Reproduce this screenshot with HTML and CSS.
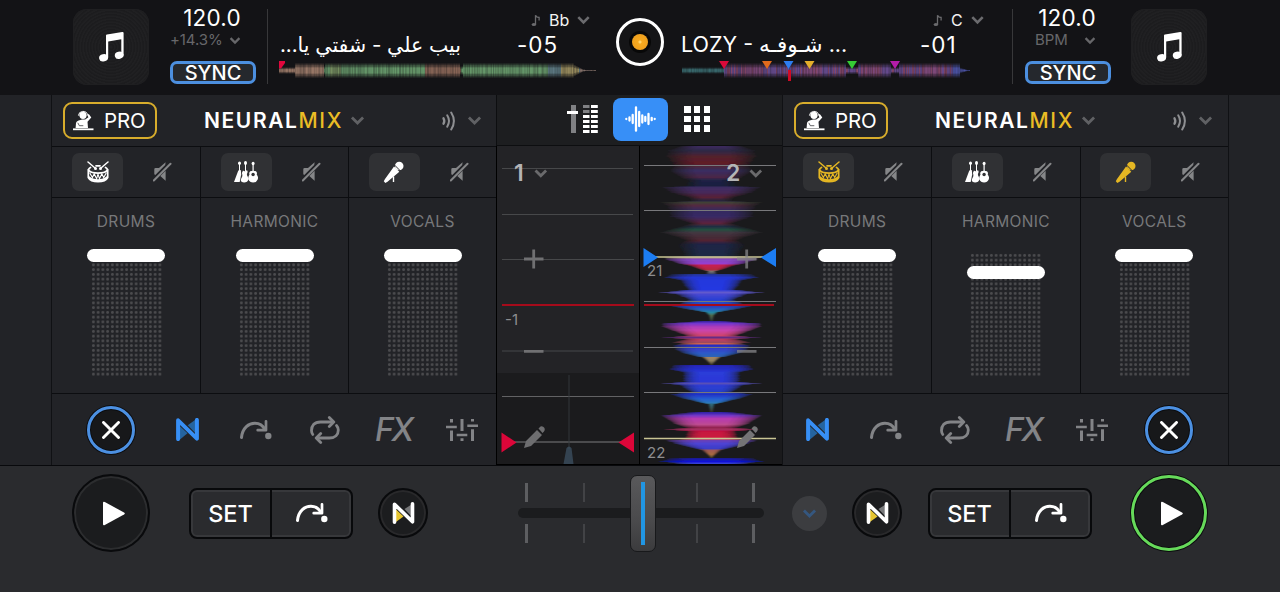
FILE: index.html
```html
<!DOCTYPE html>
<html lang="en">
<head>
<meta charset="utf-8">
<title>DJ Mixer</title>
<link rel="stylesheet" href="styles.css">
</head>
<body>
<svg class="defs" width="0" height="0">
  <symbol id="chev" viewBox="0 0 14 10"><path d="M1.8 2.2 7 7.4l5.2-5.2" fill="none" stroke="currentColor" stroke-width="2.6"/></symbol>
  <symbol id="music" viewBox="0 0 25 30"><path d="M7 3.6Q7 2.8 8 2.6L23.2.1Q24.6-.1 24.6 1V23.400H22.300V7.200L9.200 9.500V25.500H7z"/><ellipse cx="4.600" cy="25.800" rx="4.500" ry="3.600" transform="rotate(-15 4.600 25.800)"/><ellipse cx="20.200" cy="23.300" rx="4.400" ry="3.600" transform="rotate(-15 20.200 23.300)"/></symbol>
  <symbol id="quaver" viewBox="0 0 10 13"><path d="M4.500 10.500V1.200q1 2.200 3.600 2.300v3" fill="none" stroke="currentColor" stroke-width="1.300"/><ellipse cx="2.900" cy="10.500" rx="2.200" ry="1.500"/></symbol>
  <symbol id="dj" viewBox="0 0 21 21"><circle cx="10" cy="5.300" r="3.600"/><path d="M5.400 5.600a4.700 4.700 0 0 1 9.200-.8" fill="none" stroke="currentColor" stroke-width="1"/><path d="M2.600 18l.4-5q.4-2 2.600-2.600l3.600-.9h3l3.200-2.300-1.200-2.300 1.600-.9 2.500 3.600-3.800 4.200.5 6.200z"/><path d="M0 18.400h20.500v1.800H0z"/><path d="M4.800 12.800l1.500 2.900h4" fill="none" stroke="#222327" stroke-width=".7"/></symbol>
  <symbol id="waves" viewBox="0 0 16 20"><g fill="none" stroke="currentColor" stroke-linecap="round"><path d="M2.500 7.300q1.600 2.700 0 5.400" stroke-width="2.300"/><path d="M6.200 4.300q3.600 5.700 0 11.400" stroke-width="2"/><path d="M10.200 1.500q5.400 8.500 0 17" stroke-width="2"/></g></symbol>
  <symbol id="drum" viewBox="0 0 22 22"><g fill="none" stroke="currentColor" stroke-linecap="round"><path d="M1 1l7 6M21 1l-7 6" stroke-width="1.500"/><path d="M3.500 6.500Q.8 8 2 9.700q2.400 2.500 9 2.500t9-2.500q1.200-1.700-1.500-3.200M9 4.800h4" stroke-width="1.700"/><path d="M1.300 8.500v8Q3.500 20.700 11 20.700t9.700-4.200v-8" stroke-width="1.700"/><path d="M2.800 12l2.600 4.500 1.800-3.700 2.400 5 1.400-4.600 1.500 4.600 2.300-5 1.900 3.700 2.500-4.500" stroke-width="1.100"/><path d="M2 16.300q3 3 9 3t9-3" stroke-width="2"/></g><circle cx="8.500" cy="7.400" r="1.500"/><circle cx="13.500" cy="7.400" r="1.500"/></symbol>
  <symbol id="guitars" viewBox="0 0 24 22"><path d="M5 3h1v7H5zM11 3h1v7h-1zM18.500 3h1.200v8h-1.200z"/><ellipse cx="5.500" cy="2.200" rx="1.500" ry="1.800"/><ellipse cx="11.500" cy="2" rx="1.500" ry="1.900"/><ellipse cx="19.100" cy="2.500" rx="1.500" ry="1.800"/><path d="M4.300 9.500L6.800 9l.4 4.500L5.700 21 0 21z"/><path d="M9 9.500q1.500 1.500 3.800-.2 1.500.9.200 3.500-.4 1.600.8 2.900 1.300 3.300-.8 5-3 1.600-5.700-.1-1.200-1.600.7-4.500.8-2-.1-4.200z"/><path d="M16.200 10.200q2.900-1 5.800 0 1.500 1.500.7 3.300 2 2.500 1 5-1.300 3-4.600 3t-4.800-3q-.6-2.500 1.200-5-.8-2 .7-3.300z"/><circle cx="19.100" cy="13.500" r="1.700" fill="#303134"/></symbol>
  <symbol id="mic" viewBox="0 0 22 22"><circle cx="16.200" cy="5" r="4.300"/><path d="M11 5.500l5.300 5.300-2 1.600L4.500 20.800 2.300 22 .8 20.300 2 18z"/><path d="M11.500 4l6 6" stroke="#303134" stroke-width="1"/><path d="M10.500 15.500V21" stroke="currentColor" stroke-width="1.400"/></symbol>
  <symbol id="mute" viewBox="0 0 19 20"><path d="M1.300 7.200q0-1.300 1.300-1.300H6L12.600.3 12.200 3 2.300 13l-1-.8z"/><path d="M12.600 8.800v9.900L7.300 14.100z"/><path d="M.8 18.500L17.500 1.800" stroke="currentColor" stroke-width="2" stroke-linecap="round"/></symbol>
  <symbol id="nmix" viewBox="0 0 22 22"><path class="n-lo" d="M3.800 8v12.500L11 14.500z"/><path class="n-hi" d="M18.200 2v12l-7-7z"/><path d="M2 20.200V2.200L20 19.800V1.800" fill="none" stroke="currentColor" stroke-width="3.800" stroke-linejoin="round" stroke-linecap="round"/></symbol>
  <symbol id="jump" viewBox="0 0 32 20"><path d="M1.500 17.500C2.500 7.500 9 3.200 15 3.300c5 .1 8 2.600 9.700 6" fill="none" stroke="currentColor" stroke-width="3" stroke-linecap="round"/><path d="M26 1.300v8.900h-8.300" fill="none" stroke="currentColor" stroke-width="2.700" stroke-linecap="round" stroke-linejoin="round"/><circle cx="28.300" cy="16" r="3.200"/></symbol>
  <symbol id="loop" viewBox="0 0 30 28"><g fill="none" stroke="currentColor" stroke-width="2.800" stroke-linecap="round" stroke-linejoin="round"><path d="M19.300 1.500l4.500 4.500-4.500 4.500"/><path d="M22.500 6H10.500C4 6 1.500 10 1.500 14.500q0 2.300 1.300 4"/><path d="M26.500 9.500q1.800 2 1.800 4.500c0 4.500-3 8-9 8H7.500"/><path d="M10.700 17.500L6.200 22l4.500 4.500"/></g></symbol>
  <symbol id="eq" viewBox="0 0 32 22"><path d="M4 0h3v3.500H4zM0 6.700h10.800v2.500H0zM4 11.500h3V22H4zM14.500 0h3v12h-3zM10.700 14.700h10.600v2.500H10.700zM14.500 19.300h3V22h-3zM25 0h3v2.500h-3zM21.300 5.500H32V8H21.300zM25 10.300h3V22h-3z"/></symbol>
  <symbol id="close" viewBox="0 0 18 18"><path d="M1.500 1.500l15 15M16.500 1.500l-15 15" stroke="currentColor" stroke-width="2.900" stroke-linecap="round"/></symbol>
  <symbol id="play" viewBox="0 0 24 25"><path d="M1 2Q1 .2 2.800 1L22 11.500q1.600 1 0 2L2.800 24Q1 24.800 1 23z"/></symbol>
</svg>

<main class="app">
  <header class="top">
    <div class="art"><svg width="25" height="30"><use href="#music"/></svg></div>
    <div class="tempo">
      <span class="bpm">120.0</span>
      <span class="shift">+14.3% <svg width="12" height="9"><use href="#chev"/></svg></span>
      <span class="sync">SYNC</span>
    </div>
    <i class="rule"></i>
    <section class="track">
      <div class="key"><svg width="10" height="13"><use href="#quaver"/></svg><b>Bb</b><svg width="15" height="10"><use href="#chev"/></svg></div>
      <div class="song"><span class="title rtl" dir="rtl" lang="ar">بيب علي - شفتي يا...</span><span class="time">-05</span></div>
      <svg class="overview" id="ovA" width="320" height="28"></svg>
    </section>
    <div class="disc"><i></i></div>
    <section class="track second">
      <div class="key"><svg width="10" height="13"><use href="#quaver"/></svg><b>C</b><svg width="15" height="10"><use href="#chev"/></svg></div>
      <div class="song"><span class="title">LOZY - <span class="ar" lang="ar">شـوفـه</span>&lrm; ...</span><span class="time">-01</span></div>
      <svg class="overview" id="ovB" width="320" height="28"></svg>
    </section>
    <i class="rule"></i>
    <div class="tempo">
      <span class="bpm">120.0</span>
      <span class="shift unit">BPM <svg width="12" height="9"><use href="#chev"/></svg></span>
      <span class="sync">SYNC</span>
    </div>
    <div class="art"><svg width="25" height="30"><use href="#music"/></svg></div>
  </header>

  <div class="middle">
    <section class="deck">
      <div class="bar">
        <span class="pro"><svg width="21" height="21"><use href="#dj"/></svg>PRO</span>
        <span class="brand">NEURAL<em>MIX</em></span><svg class="dim" width="15" height="11"><use href="#chev"/></svg>
        <svg class="snd" width="16" height="20"><use href="#waves"/></svg><svg class="dim" width="15" height="11"><use href="#chev"/></svg>
      </div>
      <div class="stems">
        <div class="stem"><div class="sw"><span class="ico"><svg width="22" height="22"><use href="#drum"/></svg></span><svg class="mute" width="19" height="20"><use href="#mute"/></svg></div><div class="fader"><label>DRUMS</label><div class="pad"><i></i></div></div></div>
        <div class="stem"><div class="sw"><span class="ico"><svg width="24" height="22"><use href="#guitars"/></svg></span><svg class="mute" width="19" height="20"><use href="#mute"/></svg></div><div class="fader"><label>HARMONIC</label><div class="pad"><i></i></div></div></div>
        <div class="stem"><div class="sw"><span class="ico"><svg width="22" height="22"><use href="#mic"/></svg></span><svg class="mute" width="19" height="20"><use href="#mute"/></svg></div><div class="fader"><label>VOCALS</label><div class="pad"><i></i></div></div></div>
      </div>
      <nav class="nav">
        <span class="x"><svg width="18" height="18"><use href="#close"/></svg></span>
        <span class="on"><svg width="23" height="23"><use href="#nmix"/></svg></span>
        <span><svg width="32" height="20"><use href="#jump"/></svg></span>
        <span><svg width="30" height="28"><use href="#loop"/></svg></span>
        <span class="fx">FX</span>
        <span><svg width="32" height="22"><use href="#eq"/></svg></span>
      </nav>
    </section>

    <section class="center">
      <div class="modes">
        <svg class="mixer" width="31" height="28" viewBox="0 0 31 28"><path d="M4 0h5v28H4z" fill="#808184"/><path d="M0 6h11v3H0z"/><g><path fill="#808184" d="M16 0h6.500v3H16zM16 5h6.500v3H16z"/><path d="M24 0h6.800v3H24zM24 5h6.800v3H24zM16 10h6.500v3H16zM24 10h6.800v3H24zM16 15h6.500v3H16zM24 15h6.800v3H24zM16 20h6.500v3H16zM24 20h6.800v3H24zM16 25h6.500v3H16zM24 25h6.800v3H24z"/></g></svg>
        <span class="wavebtn"><svg width="31" height="26" viewBox="0 0 31 26"><path d="M1.300 13v0M4.500 11.500v3M7.700 9v8M11 1.300v23.400M14.200 6v14M17.300 9.500v7M20.300 11v4M23.500 8v10M26.700 11.800v2.400M29.700 13v0" stroke="#fff" stroke-width="2.300" stroke-linecap="round"/></svg></span>
        <span class="grid9"><i></i><i></i><i></i><i></i><i></i><i></i><i></i><i></i><i></i></span>
      </div>
      <div class="lanes">
        <svg class="lane" width="142" height="318" viewBox="497 146 142 318">
          <rect x="497" y="146" width="142" height="318" fill="#1b1b1d"/>
          <rect x="497" y="146" width="142" height="227" fill="#232326"/>
          <path d="M502 168.500h131M502 214.500h131M502 259.500h132M502 351h131" stroke="#47484a"/>
          <path d="M502 396.500h132" stroke="#626264"/><path d="M502 442h132" stroke="#4b4b4d" stroke-width="2"/>
          <path d="M502 305h132" stroke="#a50b1b" stroke-width="2"/>
          <path d="M569 375v74" stroke="#343a3e" stroke-width="1.500" opacity=".6"/>
          <path d="M566.500 448q2.500-3 5 0l2 16h-10z" fill="#3e5263" opacity=".75"/>
          <path d="M501.500 432.500v20l15-10zM634 432.500v20l-15.500-10z" fill="#dc0639"/>
          <text class="lane-no" x="514" y="181">1</text>
          <path d="M535.500 170.500l5.300 5.300 5.300-5.300" fill="none" stroke="#6a6a6c" stroke-width="2.800"/>
          <path d="M524 259h19.500M533.700 249.500v19M524 351.300h19.500" stroke="#707072" stroke-width="2.800"/>
          <text class="beat" x="505" y="325">-1</text>
          <path d="M524 448l2-7 11-11 5 5-11 11zM538.500 428.500l2-2q2.300-.8 4 1.500.8 2-.5 3.500l-1.500 1.500z" fill="#6e6e70"/>
        </svg>
        <svg class="lane right" width="142" height="318" viewBox="640 146 142 318">
          <defs><filter id="soft" x="-10%" y="-2%" width="120%" height="104%"><feGaussianBlur stdDeviation="1.300 .35"/></filter></defs>
          <rect x="640" y="146" width="142" height="318" fill="#1a1a1c"/>
          <g id="bands" filter="url(#soft)"></g>
          <path d="M644 165.500h132M644 210.500h132M644 301.500h132M644 347.500h132M644 392.500h132" stroke="#78787b"/>
          <path d="M644 257h132M644 438.500h132" stroke="#c9c594" stroke-width="1.400"/>
          <path d="M644 305h130" stroke="#a50b1b" stroke-width="2"/>
          <path d="M643.500 248v19l14.500-9.500zM776 248v19l-15-9.500z" fill="#1c7df3"/>
          <text class="lane-no" x="726" y="181">2</text>
          <path d="M750.500 170.500l5.300 5.300 5.300-5.300" fill="none" stroke="#6a6a6c" stroke-width="2.800"/>
          <path d="M737 259h19.500M746.700 249.500v19M737 351.300h19.500" stroke="#868688" stroke-opacity=".75" stroke-width="2.800"/>
          <text class="beat" x="647" y="276">21</text>
          <text class="beat" x="647" y="458">22</text>
          <path d="M737 448l2-7 11-11 5 5-11 11zM751.500 428.500l2-2q2.300-.8 4 1.500.8 2-.5 3.500l-1.500 1.500z" fill="#747476"/>
        </svg>
      </div>
    </section>

    <section class="deck">
      <div class="bar">
        <span class="pro"><svg width="21" height="21"><use href="#dj"/></svg>PRO</span>
        <span class="brand">NEURAL<em>MIX</em></span><svg class="dim" width="15" height="11"><use href="#chev"/></svg>
        <svg class="snd" width="16" height="20"><use href="#waves"/></svg><svg class="dim" width="15" height="11"><use href="#chev"/></svg>
      </div>
      <div class="stems">
        <div class="stem"><div class="sw"><span class="ico lit"><svg width="22" height="22"><use href="#drum"/></svg></span><svg class="mute" width="19" height="20"><use href="#mute"/></svg></div><div class="fader"><label>DRUMS</label><div class="pad"><i></i></div></div></div>
        <div class="stem"><div class="sw"><span class="ico"><svg width="24" height="22"><use href="#guitars"/></svg></span><svg class="mute" width="19" height="20"><use href="#mute"/></svg></div><div class="fader"><label>HARMONIC</label><div class="pad lowered"><i></i></div></div></div>
        <div class="stem"><div class="sw"><span class="ico lit"><svg width="22" height="22"><use href="#mic"/></svg></span><svg class="mute" width="19" height="20"><use href="#mute"/></svg></div><div class="fader"><label>VOCALS</label><div class="pad"><i></i></div></div></div>
      </div>
      <nav class="nav flip">
        <span class="on"><svg width="23" height="23"><use href="#nmix"/></svg></span>
        <span><svg width="32" height="20"><use href="#jump"/></svg></span>
        <span><svg width="30" height="28"><use href="#loop"/></svg></span>
        <span class="fx">FX</span>
        <span><svg width="32" height="22"><use href="#eq"/></svg></span>
        <span class="x"><svg width="18" height="18"><use href="#close"/></svg></span>
      </nav>
    </section>
  </div>

  <footer class="transport">
    <span class="playbtn"><svg width="24" height="25"><use href="#play"/></svg></span>
    <div class="setgrp"><span>SET</span><span><svg width="32" height="20"><use href="#jump"/></svg></span></div>
    <span class="nbtn"><svg width="23" height="22"><use href="#nmix"/></svg></span>
    <div class="cross">
      <div class="ticks"><i class="big"></i><i></i><i></i><i class="big"></i></div>
      <div class="groove"></div>
      <div class="ticks"><i class="big"></i><i></i><i></i><i class="big"></i></div>
      <div class="knob"><i></i></div>
    </div>
    <span class="more"><svg width="15" height="11"><use href="#chev"/></svg></span>
    <span class="nbtn r"><svg width="23" height="22"><use href="#nmix"/></svg></span>
    <div class="setgrp r"><span>SET</span><span><svg width="32" height="20"><use href="#jump"/></svg></span></div>
    <span class="playbtn live"><svg width="24" height="25"><use href="#play"/></svg></span>
  </footer>
</main>
<script src="app.js"></script>
</body>
</html>
```

FILE: styles.css
```css
* { box-sizing: border-box; }
body { margin: 0; background: #2a2b2e; font-family: Inter, "Liberation Sans", sans-serif; color: #fff; overflow: hidden; }
svg { fill: currentColor; display: block; flex: none; }
.defs { display: none; }
.app { width: 1280px; height: 592px; display: grid; grid-template-rows: 95px 371px 126px; }

/* header */
.top { background: #131316; display: flex; height: 95px; padding: 9px 73px 0; }
.art { width: 76px; height: 76px; border-radius: 14px; background: repeating-radial-gradient(circle, #202022 0 1px, #1c1c1e 2px 3px); display: grid; place-items: center; box-shadow: inset 0 0 0 1px #1f1f21; flex: none; }
.tempo { width: 86px; margin-left: 21px; display: flex; flex-direction: column; align-items: center; flex: none; }
.tempo + .art { margin-left: 20px; }
.bpm { font-size: 22.5px; line-height: 18px; letter-spacing: .2px; margin-left: -2px; }
.shift { display: flex; align-items: center; gap: 6px; margin-top: 4px; width: 86px; font-size: 15px; line-height: 18px; color: #67676a; letter-spacing: -.1px; white-space: nowrap; }
.unit { padding-left: 10px; gap: 16px; }
.sync { margin-top: 12px; width: 86px; height: 23px; border: 3px solid #4c8fdf; border-radius: 7px; background: #25282d; font-size: 20px; font-weight: 500; line-height: 18px; text-align: center; }
.rule { width: 1px; height: 75px; background: #38383a; margin-left: 11px; flex: none; }
.track { width: 322px; margin-left: 10px; display: flex; flex-direction: column; flex: none; }
.key { display: flex; align-items: center; height: 22px; padding-left: 253px; color: #6b6b6e; }
.key b { color: #f2f2f2; font-weight: 400; font-size: 16px; margin: 0 7px 0 8px; }
.second .key { padding-left: 252px; }
.song { display: flex; height: 27px; align-items: center; padding-bottom: 1px; }
.title { width: 183px; white-space: nowrap; font-size: 21.5px; font-family: Inter, "DejaVu Sans", sans-serif; font-weight: 400; flex: none; }
.title.rtl { font-size: 20.5px; }
.time { margin-left: 56px; font-size: 22.5px; letter-spacing: 1px; font-weight: 400; }
.disc { width: 48px; height: 48px; border: 3px solid #fff; border-radius: 50%; margin: 9px 0 0 16px; display: grid; place-items: center; background: #151517; flex: none; }
.disc i { width: 16px; height: 16px; border-radius: 50%; background: radial-gradient(circle, #ffd36a 0 1px, #f6a91f 2px, #eb9a1c); box-shadow: 0 0 0 3px #080808; }
.second { margin-left: 17px; width: 320px; }
.second + .rule + .tempo { margin-left: 12px; }

/* decks */
.middle { display: grid; grid-template-columns: 444px 287px 445px; padding-left: 52px; background: #222327; border-bottom: 1px solid #08090c; }
.deck { box-shadow: -1px 0 #101114, 1px 0 #101114; display: grid; grid-template-rows: 51px 248px 71px; background: #222327; }
.bar { display: flex; align-items: center; padding-left: 11px; }
.pro { width: 94px; height: 37px; border: 2px solid #d8ad2c; border-radius: 9px; display: flex; align-items: center; gap: 10px; padding-left: 8px; font-size: 20.5px; letter-spacing: -.2px; }
.brand { margin-left: 47px; width: 140px; font-size: 21px; font-weight: 600; letter-spacing: 1.6px; font-family: Inter, sans-serif; white-space: nowrap; }
.brand em { font-style: normal; color: #eabd25; font-weight: 500; }
.dim { color: #606164; margin-left: 6px; }
.snd { color: #8e8f92; margin-left: 76px; }
.snd + .dim { margin-left: 10px; }
.stems { display: grid; grid-template-columns: repeat(3, 1fr); border-top: 1px solid #0c0d10; border-bottom: 1px solid #0c0d10; }
.stem + .stem { border-left: 1px solid #0c0d10; }
.sw { height: 51px; display: flex; align-items: center; padding-left: 20px; border-bottom: 1px solid #0c0d10; }
.stem + .stem .sw { padding-left: 19.500px; }
.ico { width: 51px; height: 38px; border-radius: 7px; background: #303134; display: grid; place-items: center; }
.lit { color: #e5b723; }
.mute { color: #858688; margin-left: 30px; }
.fader { display: flex; flex-direction: column; align-items: center; }
.fader label { font-size: 15.5px; color: #77787a; line-height: 20px; margin-top: 14px; letter-spacing: .35px; }
.pad { margin-top: 17px; width: 77px; height: 131px; display: flex; justify-content: center; background: radial-gradient(circle, #4b4b4e 0 1.1px, transparent 1.700px) 0 0 / 4.76px 4.76px; background-clip: content-box; background-origin: content-box; padding: 4px 3px 3px; }
.pad i { flex: none; width: 78px; height: 13px; border-radius: 7px; background: #fff; margin-top: -4px; }
.pad.lowered i { margin-top: 13px; }
.nav { display: flex; align-items: center; padding-left: 33px; color: #838487; }
.nav span { width: 68.5px; display: flex; justify-content: center; flex: none; }
.nav .x { width: 48px; height: 48px; margin: 0 18.500px 0 2px; border: 3px solid #4c90e2; border-radius: 50%; align-items: center; background: #17181a; color: #fff; box-shadow: 0 0 0 1px #0b0c0f, inset 0 0 0 1px #0b0c0f; }
.nav .on { color: #378ff6; }
.nav .fx { font-size: 32px; font-style: italic; font-weight: 500; letter-spacing: -2.500px; line-height: 34px; }
.nav.flip { padding-left: .5px; }
.flip .x { margin: 0 0 0 18.500px; }
.n-lo, .n-hi { fill: #25649f; }

/* centre */
.center { display: grid; grid-template-rows: 51px 319px; background: #0d0e10; }
.modes { display: flex; align-items: center; padding: 0 0 2px 70px; background: #1d1e20; margin: 0 1px 1px; }
.wavebtn { width: 55px; height: 43px; margin-left: 15px; border-radius: 8px; background: #378ff7; display: grid; place-items: center; }
.grid9 { margin-left: 16px; display: grid; grid-template-columns: repeat(3, 6.600px); gap: 3.200px; }
.grid9 i { height: 6.600px; background: #fff; }
.lanes { display: flex; gap: 1px; padding-left: 1px; background: #000; }
.lane-no { font: 600 23px Inter, sans-serif; fill: #b4b4b6; }
.beat { font: 400 15px Inter, sans-serif; fill: #8d8d8f; }

/* transport */
.transport { background: #2a2b2e; height: 94px; display: flex; align-items: center; padding-left: 72px; }
.playbtn { width: 78px; height: 78px; border-radius: 50%; border: 2px solid #090a0c; background: #1b1c1e; box-shadow: inset 0 0 0 2px #2c2d2f; display: grid; place-items: center; padding-left: 5px; flex: none; }
.playbtn.live { border: 3px solid #66da5a; width: 76px; height: 76px; box-shadow: 0 0 0 1px #0a0b0d, inset 0 0 0 1px #0a0b0d; margin-left: 39px; }
.setgrp { width: 164px; height: 51px; margin-left: 39px; border: 2px solid #08090b; border-radius: 8px; display: flex; font-size: 23.5px; font-weight: 500; box-shadow: inset 0 0 0 2px #37383b; background: #2a2b2e; flex: none; }
.setgrp span { flex: 1; display: grid; place-items: center; }
.setgrp span + span { border-left: 2px solid #08090b; }
.nbtn { width: 50px; height: 50px; border-radius: 50%; border: 2px solid #090a0c; background: #1c1d1f; box-shadow: inset 0 0 0 2px #29292b; margin-left: 25px; display: grid; place-items: center; flex: none; }
.nbtn .n-lo, .nbtn .n-hi { fill: none; }
.cross { width: 246px; margin-left: 90px; position: relative; flex: none; }
.ticks { height: 19px; display: grid; grid-template-columns: 57.500px 113.500px 56px 3px; padding-left: 7px; }
.ticks i { width: 2px; background: #424346; }
.ticks .big { width: 3px; background: #5d5e61; }
.groove { height: 10px; border-radius: 5px; background: #1b1c1e; margin: 6px 0; }
.knob { position: absolute; left: 112px; top: -8px; width: 26px; height: 77px; border-radius: 7px; border: 1px solid #18191b; background: linear-gradient(#59595b, #4a4a4c 60%, #3b3b3d); padding: 6px 10px; }
.knob i { display: block; width: 4px; height: 63px; background: #2196e3; }
.more { width: 35px; height: 35px; margin-left: 28px; border-radius: 50%; background: #3c3d40; color: #35577f; display: grid; place-items: center; flex: none; }
.setgrp.r { margin-left: 26px; }
```

FILE: app.js
```js
const NS = 'http://www.w3.org/2000/svg';
function add(parent, tag, attrs) {
  const el = document.createElementNS(NS, tag);
  for (const k in attrs) el.setAttribute(k, attrs[k]);
  parent.appendChild(el);
  return el;
}
const noise = i => { const v = Math.sin(i * 12.9898) * 43758.5453; return v - Math.floor(v); };
const mix = (a, b, t) => a + (b - a) * t;

// Beat waveform bands: y, half width, red, green, blue, opacity
const bands = [
  [146,30,90,60,150,.6],[150,42,70,60,120,.5],[156,43,130,40,60,.6],[163,38,150,30,50,.65],[166,36,120,50,90,.6],
  [170,40,85,65,160,.55],[177,30,120,50,110,.55],[180,22,40,50,130,.4],[185,25,35,45,120,.4],[187,47,90,60,150,.65],
  [192,40,110,55,140,.6],[197,22,140,40,80,.6],[200,20,60,50,100,.5],[202,49,100,100,80,.6],[205,43,135,60,100,.6],
  [210,40,75,55,150,.6],[216,40,85,55,170,.55],[223,20,150,45,85,.6],[226,30,40,70,110,.5],[229,40,40,110,85,.75],
  [232,49,95,80,95,.65],[237,32,110,60,80,.6],[240,25,130,45,70,.6],[244,32,35,50,120,.5],[255,26,38,60,105,.6],
  [257,46,190,160,150,.9],[259,45,150,80,220,.95],[263,32,165,70,230,1],[265,23,220,30,90,1],[269,11,200,45,70,1],
  [271,4,140,130,125,.9],[273,5,80,90,120,.8],[274,40,40,60,190,.7],[277,45,40,60,245,.9],[280,30,40,60,245,1],
  [289,23,40,60,250,1],[292,50,110,100,230,.95],[294,34,80,80,240,.9],[299,22,45,70,235,1],[303,30,40,80,225,1],
  [306,39,50,70,215,.95],[309,23,40,110,210,1],[312,6,40,150,180,1],[315,2.500,95,130,90,.8],[320,1,90,100,90,.5],
  [321,20,80,40,220,.6],[323,48,130,60,235,.9],[326,48,190,65,210,.95],[330,38,225,75,190,1],[335,25,230,75,120,1],
  [337,47,120,50,160,.8],[339,26,220,65,110,.9],[342,38,190,85,110,.8],[343,30,235,110,90,.9],[345,37,40,50,220,.9],
  [349,35,60,75,225,.95],[353,27,45,100,220,1],[356,15,50,110,200,1],[357,9,180,145,110,1],[360,5,170,150,110,.9],
  [364,1,100,90,60,.7],[365,38,40,40,210,.9],[369,40,40,50,230,.95],[372,27,45,65,240,1],[381,27,45,60,240,1],
  [383,49,100,90,210,.9],[385,30,50,65,235,1],[391,21,40,70,225,1],[394,40,35,55,225,.9],[398,28,40,100,235,1],
  [402,12,45,130,210,1],[404,3,50,120,140,.9],[411,1,90,90,70,.6],[412,24,60,40,210,.7],[415,48,130,60,225,.9],
  [418,44,205,65,200,.95],[424,35,210,80,160,1],[427,25,170,40,90,.9],[429,45,190,50,110,.85],[431,24,220,20,70,1],
  [437,25,225,30,70,1],[439,30,200,60,120,1],[440,44,120,70,210,.9],[443,36,85,75,235,1],[448,17,65,65,220,1],
  [450,9,180,100,90,1],[454,4,190,120,70,.9],[457,1,120,100,60,.7],[458,42,30,30,180,.8],[461,50,10,20,240,1],[464,28,80,90,240,1]
];
const g = document.getElementById('bands');
for (let i = 0; i < bands.length - 1; i++) {
  const a = bands[i], b = bands[i + 1];
  for (let y = a[0]; y < b[0]; y++) {
    const t = (y - a[0]) / (b[0] - a[0]);
    const c = [2, 3, 4].map(k => Math.round(mix(a[k], b[k], t))).join(',');
    const w = mix(a[1], b[1], t) * (.99 + noise(y) * .05), o = mix(a[5], b[5], t) * (y < 257 ? .62 : .92);
    [[1, .36], [.92, .25], [.84, .25], [.76, .25], [.68, .28], [.58, .32], [.46, .35]].forEach(([s, k]) =>
      add(g, 'rect', { x: 711.500 - w * s, y, width: w * s * 2, height: 1, fill: `rgb(${c})`, opacity: (o * k).toFixed(2) }));
  }
}

// Track overview strips
function overview(id, length, colorAt, heightAt) {
  const s = document.getElementById(id);
  const body = add(s, 'g', { class: 'strip', style: 'filter: blur(.5px)' });
  for (let i = 0; i < length; i += 1) {
    const h = heightAt(i);
    [[1, .16, .1], [.75, .2, .14], [.45, .34, .3]].forEach(([k, base, vary]) =>
      add(body, 'rect', { x: i + 1, y: 12.5 - h * k, width: 1, height: h * 2 * k, fill: colorAt(i), opacity: (base + noise(i + 3) * vary).toFixed(2) }));
  }
  return s;
}
const a = overview('ovA', 317,
  i => i < 45 ? '#b48d78' : (i > 145 && i < 182) ? '#a07664' : i > 281 && i < 300 ? '#b3a46c' : i > 300 ? '#a78e84' : i > 268 ? '#7195a0' : i > 50 && i < 62 ? '#8fae74' : '#78b47c',
  i => i < 16 ? 3 : (i === 45 || (i > 180 && i < 184)) ? 4 : i > 305 ? .5 : i > 294 ? Math.max(1, 6 - (i - 294) * .5) : 7);
add(a, 'path', { d: 'M1 3h6v2L3 10.500H1z', fill: '#e0073d' });
const b = overview('ovB', 288,
  i => i < 42 ? '#417b80' : i > 270 ? '#5a63c9' : noise(i * 7) > .75 ? '#a3547f' : i % 60 < 20 ? '#95558f' : '#7656a5',
  i => i < 42 ? 3 : i > 277 ? Math.max(.5, 3 - (i - 277) * .3) : i > 163 && i < 176 ? 3.5 : i > 208 && i < 217 ? 3 : 7);
add(b, 'path', { d: 'M107 12h3v11h-3z', fill: '#d00a26' });
[[43, '#dc0a3a'], [86, '#e16a1c'], [107.5, '#2d7df0'], [128.500, '#e5ae2b'], [171, '#35cc35'], [214, '#b31caa']].forEach(([x, f]) =>
  add(b, 'path', { d: `M${x - 5} 3h10l-5 8z`, fill: f }));

// Two-tone accents inside the round Neural Mix buttons
document.querySelectorAll('.nbtn svg').forEach(s => {
  s.setAttribute('viewBox', '0 0 22 22');
  const first = s.firstElementChild;
  const lo = add(s, 'path', { d: 'M2 6v15L11 14.500z', fill: '#e6c530' });
  const hi = add(s, 'path', { d: 'M19 2.500v12L12 7z', fill: '#77787a' });
  s.insertBefore(lo, first);
  s.insertBefore(hi, first);
  first.classList.add('plain');
  first.remove();
  add(s, 'path', { d: 'M2 20.200V2.200L20 19.800V1.800', fill: 'none', stroke: '#fff', 'stroke-width': 3.600, 'stroke-linejoin': 'round', 'stroke-linecap': 'round' });
});
```
